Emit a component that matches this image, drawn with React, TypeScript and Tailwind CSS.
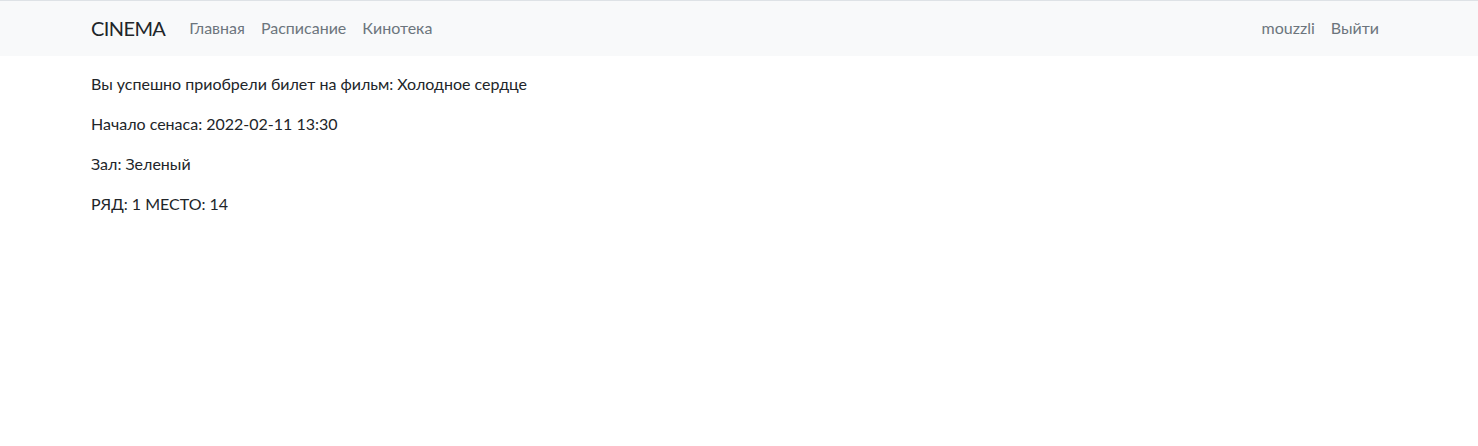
const font = "font-['Lato','Noto_Sans','Liberation_Sans',sans-serif]";

const App = () => {
  return (
    <div className={`min-h-screen bg-white text-[#212529] ${font}`}>
      <nav className="border-t border-[#dee2e6] bg-[#f8f9fa] pt-[7px] pb-[8px]">
        <div className="mx-auto flex max-w-[1320px] items-center px-[12px]">
          <a className="mr-[16px] py-[5px] text-[20px] leading-[30px] tracking-[-0.6px] text-[#212529]">
            CINEMA
          </a>
          <ul className="flex text-[16px] leading-[24px] text-[#6c757d]">
            <li className="px-[8px] py-[8px]">Главная</li>
            <li className="px-[8px] py-[8px]">Расписание</li>
            <li className="px-[8px] py-[8px]">Кинотека</li>
          </ul>
          <ul className="ml-auto flex text-[16px] leading-[24px] text-[#6c757d]">
            <li className="px-[8px] py-[8px]">mouzzli</li>
            <li className="px-[8px] py-[8px]">Выйти</li>
          </ul>
        </div>
      </nav>
      <div className="mx-auto mt-[16px] max-w-[1320px] px-[12px] text-[16px] leading-[24px]">
        <p className="mb-[16px]">Вы успешно приобрели билет на фильм: Холодное сердце</p>
        <p className="mb-[16px]">Начало сенаса: 2022-02-11 13:30</p>
        <p className="mb-[16px]">Зал: Зеленый</p>
        <p className="mb-[16px]">РЯД: 1 МЕСТО: 14</p>
      </div>
    </div>
  );
};

export default App;
